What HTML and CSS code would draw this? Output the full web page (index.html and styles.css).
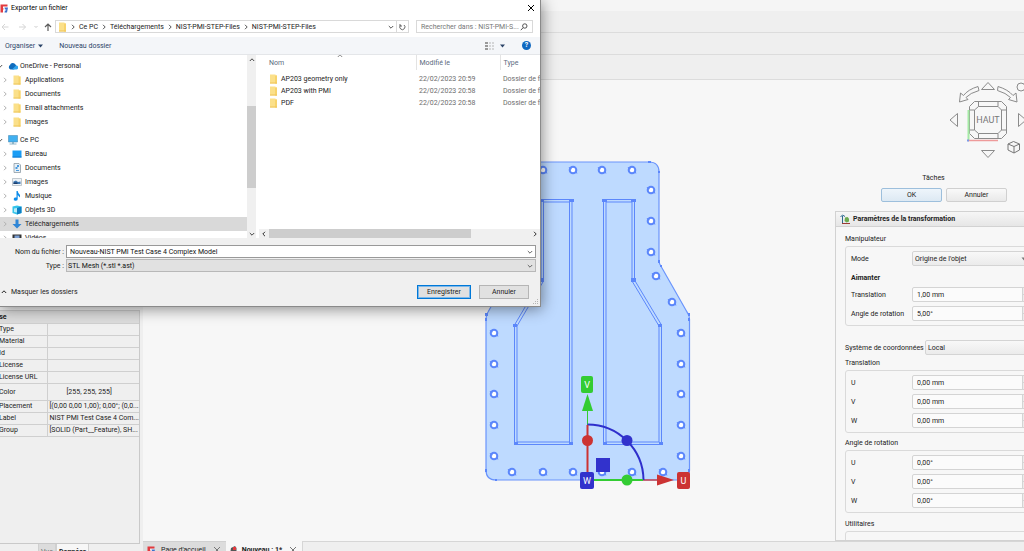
FILE: index.html
```html
<!DOCTYPE html>
<html lang="fr">
<head>
<meta charset="utf-8">
<title>Exporter un fichier</title>
<link rel="stylesheet" href="styles.css">
</head>
<body>
<svg class="defs" width="0" height="0" aria-hidden="true">
  <defs>
    <symbol id="chev-r" viewBox="0 0 6 6"><path d="M2 .8 4.2 3 2 5.2" fill="none" stroke="currentColor"/></symbol>
    <symbol id="chev-l" viewBox="0 0 6 6"><path d="M4 .8 1.8 3 4 5.2" fill="none" stroke="currentColor"/></symbol>
    <symbol id="chev-d" viewBox="0 0 6 6"><path d="M.8 2 3 4.2 5.2 2" fill="none" stroke="currentColor"/></symbol>
    <symbol id="chev-u" viewBox="0 0 6 6"><path d="M.8 4 3 1.8 5.2 4" fill="none" stroke="currentColor"/></symbol>
    <symbol id="cross" viewBox="0 0 8 8"><path d="M1 1 7 7M7 1 1 7" fill="none" stroke="currentColor"/></symbol>
    <symbol id="folder" viewBox="0 0 9 10"><path d="M1 .5h5.5v1H8v8H1z" fill="#fbe08a"/><path d="M6 1.5h2v8H6z" fill="#f7d36c"/><path d="M1 8.5h7v1H1z" fill="#eec55a"/></symbol>
    <symbol id="freecad" viewBox="0 0 9 9"><path d="M.5.5h7v2h-4.500v1.500h2v2h-2v2.500H.5z" fill="#e23a3f"/><path d="M3.500 3h4.500L6.500 8.500H3z" fill="#fff"/><path d="M4.500 3.500H8L7 8.500H4.500l.5-2h1l.3-1H5z" fill="#3d6fc9"/></symbol>
    <symbol id="hole" viewBox="0 0 10 10"><circle cx="5" cy="5" r="3.300" fill="#fff" stroke="#5c87fb" stroke-width="2"/><path d="M.5 2 4 2.500 3 5zM9.500 8.500 6.500 8 8 5.500z" fill="#5c87fb"/></symbol>
  </defs>
</svg>

<div class="app">
  <div class="menubar"></div>
  <div class="toolbar"></div>
  <div class="toolbar"></div>
  <div class="toolbar last"></div>
  <div class="workspace">
    <aside class="dock">
      <div class="tree-space"></div>
      <div class="props">
        <table>
          <colgroup><col class="c-key"><col></colgroup>
          <tr class="group"><th colspan="2">Base</th></tr>
          <tr><td>Type</td><td></td></tr>
          <tr><td>Material</td><td></td></tr>
          <tr><td>Id</td><td></td></tr>
          <tr><td>License</td><td></td></tr>
          <tr><td>License URL</td><td></td></tr>
          <tr class="tall"><td>Color</td><td class="color">[255, 255, 255]</td></tr>
          <tr><td>Placement</td><td>[(0,00 0,00 1,00); 0,00°; (0,0...</td></tr>
          <tr><td>Label</td><td>NIST PMI Test Case 4 Com...</td></tr>
          <tr><td>Group</td><td>[SOLID (Part__Feature), SH...</td></tr>
        </table>
      </div>
      <div class="dock-tabs"><button class="off">Vue</button><button class="on">Données</button></div>
    </aside>

    <main class="center">
      <div class="viewport">
        <div class="scene">
          <svg class="model" viewBox="480 155 220 340" role="img" aria-label="Modèle">
            <path d="M526 162H649q10 0 10 10V261q0 3 3 7L687 312q2.500 3 2.500 7V470q0 10-10 10H496q-10 0-10-10V319q0-4 2-7L513 268q3-4 3-7V172q0-10 10-10z" fill="#bedaff" stroke="#6a94fc" stroke-width="1.200"/>
            <g fill="none" stroke="#5c87fb">
              <path d="M603.500 199.500H634.500V280L661.500 325V444.500H603.500zM606 202H632V281L659 326V442H606z"/>
              <path d="M572 199.500H541V280L514.500 325V444.500H572zM569.500 202H543.500V281L517 326V442H569.500z"/>
            </g>
            <g fill="#5c87fb">
              <path d="M602 199h5v3h-5zM631 199h5v3h-5zM569 199h5v3h-5zM539 199h5v3h-5zM631 278h5v4h-5zM539 278h5v4h-5zM658 324h4v3h-4zM513 324h4v3h-4zM603 442h4v3h-4zM659 442h4v3h-4zM514 442h4v3h-4zM569 442h4v3h-4z"/>
              <path d="M648 161h3v2h-3zM658 171h2v2h-2zM658 260h2v3h-2zM660 265h2v2h-2zM688 313h2v3h-2zM485 313h3v3h-3zM485 318h2v3h-2zM688 318h2v3h-2zM485 469h2v3h-2zM495 479h2v2h-2zM688 469h2v3h-2z"/>
            </g>
            <g>
              <use href="#hole" x="538" y="165" width="10" height="10"/><use href="#hole" x="568" y="165" width="10" height="10"/><use href="#hole" x="597" y="165" width="10" height="10"/><use href="#hole" x="627" y="165" width="10" height="10"/>
              <use href="#hole" x="646" y="185" width="10" height="10"/><use href="#hole" x="646" y="216" width="10" height="10"/><use href="#hole" x="646" y="247" width="10" height="10"/><use href="#hole" x="651" y="271" width="10" height="10"/><use href="#hole" x="667" y="297" width="10" height="10"/><use href="#hole" x="498" y="297" width="10" height="10"/>
              <use href="#hole" x="676" y="328" width="10" height="10"/><use href="#hole" x="676" y="359" width="10" height="10"/><use href="#hole" x="676" y="389" width="10" height="10"/><use href="#hole" x="676" y="420" width="10" height="10"/><use href="#hole" x="676" y="451" width="10" height="10"/>
              <use href="#hole" x="489" y="328" width="10" height="10"/><use href="#hole" x="489" y="359" width="10" height="10"/><use href="#hole" x="489" y="389" width="10" height="10"/><use href="#hole" x="489" y="420" width="10" height="10"/><use href="#hole" x="489" y="451" width="10" height="10"/>
              <use href="#hole" x="507" y="467" width="10" height="10"/><use href="#hole" x="538" y="467" width="10" height="10"/><use href="#hole" x="568" y="467" width="10" height="10"/><use href="#hole" x="597" y="467" width="10" height="10"/><use href="#hole" x="627" y="467" width="10" height="10"/><use href="#hole" x="658" y="467" width="10" height="10"/>
            </g>
            <path d="M587.500 425V410" stroke="#33cc33"/>
            <path d="M587.500 394 593 411H582z" fill="#33cc33"/>
            <path d="M643 480H658" stroke="#cc3333" stroke-width="1.300"/>
            <path d="M657 474.500 674 480 657 485.500z" fill="#cc3333"/>
            <path d="M587.500 424.500A56 56 0 0 1 643.500 480" fill="none" stroke="#2f2fcc" stroke-width="2"/>
            <path d="M587.500 425V472" stroke="#cc3333" stroke-width="2"/>
            <path d="M593 480H643" stroke="#33cc33" stroke-width="2"/>
            <circle cx="587.500" cy="440.500" r="5.500" fill="#cc3333"/>
            <circle cx="627" cy="440.500" r="5.500" fill="#3232cc"/>
            <circle cx="627" cy="480" r="5.500" fill="#33cc33"/>
            <path d="M596 458h14v14h-14z" fill="#3232cc"/>
            <rect x="581" y="376" width="12" height="17" rx="2" fill="#33cc33"/>
            <rect x="580" y="472" width="14" height="17" rx="2" fill="#3232cc"/>
            <rect x="677" y="472" width="13" height="17" rx="2" fill="#cc3333"/>
            <g class="axis"><text x="587" y="388">V</text><text x="587" y="484">W</text><text x="683.500" y="484">U</text></g>
          </svg>
        </div>

        <section class="tasks">
          <svg class="navcube" viewBox="945 80 79 80" role="img" aria-label="Cube de navigation">
            <g fill="#f7f7f7" stroke="#8b8b8b">
              <path d="M988 82.500 994.500 89.500H981.500zM988 157.500 981.500 150.500H994.500zM950 120 957.500 113.500V126.500zM1026 120 1018.500 113.500V126.500z"/>
              <path d="M978 86.500Q968 89.500 963.500 95.500L960.500 93 959.500 102 968 99.500 966 97.500Q970 93 979 90.500zM998 86.500Q1008 89.500 1013 95.500L1016 93 1017 102 1008.500 99.500 1010.500 97.500Q1006 93 997.500 90.500z"/>
              <circle cx="1021" cy="87" r="4"/>
              <path d="M974.500 101.500H1001.500L1006.500 106.500V133.500L1001.500 138.500H974.500L969.500 133.500V106.500z"/>
              <path d="M978.500 106.500H998L1001.500 110V130L998 133.500H978.500L974.500 130V110z"/>
              <path d="M978.500 101.500V106.500M998 101.500V106.500M978.500 138.500V133.500M998 138.500V133.500M969.500 110H974.500M969.500 130H974.500M1006.500 110H1001.500M1006.500 130H1001.500" fill="none"/>
              <path d="M1008 144 1013.500 141.500 1019.500 144V150L1014 153 1008 150zM1008 144 1014 146.500 1019.500 144M1014 146.500V153" stroke="#777"/>
            </g>
            <path d="M968.500 110V140" stroke="#a5eaa5" stroke-width="2"/>
            <path d="M968 140.500H998" stroke="#ee9a9a" stroke-width="1.500"/>
            <path d="M967 139.500h2v2h-2z" fill="#7b9be8"/>
            <text x="988" y="123">HAUT</text>
          </svg>
          <h2>Tâches</h2>
          <div class="task-buttons"><button class="ok">OK</button><button>Annuler</button></div>
          <div class="panel">
            <h3><svg width="11" height="11" viewBox="0 0 11 11"><path d="M5 3.500 7.500 3 9 4.500v3L6.500 8.500 4.500 7z" fill="#6cab50"/><path d="M2.500 9V2M.5 3 2.500 1 5 2.500" stroke="#2d6b8e" fill="none"/><path d="M2 9.500h8" stroke="#9b3a35"/></svg>Paramètres de la transformation</h3>
            <div class="panel-body">
              <div class="caption">Manipulateur</div>
              <div class="box first">
                <div class="row"><label for="mode">Mode</label><select id="mode"><option>Origine de l'objet</option></select><svg class="tri" viewBox="0 0 6 4"><path d="M.5.5h5L3 3.500z" fill="#777"/></svg></div>
                <div class="row strong">Aimanter</div>
                <div class="row"><label for="tr">Translation</label><input id="tr" value="1,00 mm"><i class="spin"></i></div>
                <div class="row"><label for="an">Angle de rotation</label><input id="an" value="5,00°"><i class="spin"></i></div>
              </div>
              <div class="coords"><label for="sys">Système de coordonnées</label><select id="sys"><option>Local</option></select></div>
              <div class="caption">Translation</div>
              <div class="box">
                <div class="row"><label for="tu">U</label><input id="tu" value="0,00 mm"><i class="spin"></i></div>
                <div class="row"><label for="tv">V</label><input id="tv" value="0,00 mm"><i class="spin"></i></div>
                <div class="row"><label for="tw">W</label><input id="tw" value="0,00 mm"><i class="spin"></i></div>
              </div>
              <div class="caption angle">Angle de rotation</div>
              <div class="box">
                <div class="row"><label for="au">U</label><input id="au" value="0,00°"><i class="spin"></i></div>
                <div class="row"><label for="av">V</label><input id="av" value="0,00°"><i class="spin"></i></div>
                <div class="row"><label for="aw">W</label><input id="aw" value="0,00°"><i class="spin"></i></div>
              </div>
              <div class="caption util">Utilitaires</div>
              <div class="box tools"><button aria-label="Outil 1"></button><button aria-label="Outil 2"></button></div>
            </div>
          </div>
        </section>
      </div>
      <div class="mdi">
        <div class="tab"><svg width="9" height="9"><use href="#freecad"/></svg><span>Page d'accueil</span><button aria-label="Fermer"><svg width="8" height="8"><use href="#cross"/></svg></button></div>
        <div class="tab active"><svg width="7" height="9" viewBox="0 0 7 9"><path d="M1 2 5 0 6.500 2V7L2 9 0 8z" fill="#555"/><path d="M3 1h3v3H3z" fill="#e23a3f"/><path d="M1 5h2v2H1z" fill="#ddd"/></svg><span>Nouveau : 1*</span><button aria-label="Fermer"><svg width="8" height="8"><use href="#cross"/></svg></button></div>
        <div class="rest"></div>
      </div>
    </main>
  </div>
</div>

<div class="dialog" role="dialog" aria-label="Exporter un fichier">
  <header class="title"><svg width="9" height="9"><use href="#freecad"/></svg><span>Exporter un fichier</span><button aria-label="Fermer"><svg width="8" height="8"><use href="#cross"/></svg></button></header>
  <div class="address">
    <svg class="nav" width="52" height="8" viewBox="0 0 52 8"><g fill="none"><path d="M8.500 4H2M5 1 2 4 5 7M19 4h6.500M22.500 1l3 3-3 3" stroke="#d5d5d5"/><path d="M34.500 3 36 4.500 37.500 3" stroke="#ccc"/><path d="M48 8V1M45 4 48 1 51 4" stroke="#5c5c5c" stroke-width="1.200"/></g></svg>
    <div class="path">
      <svg width="9" height="10"><use href="#folder"/></svg>
      <svg class="sep" width="6" height="6"><use href="#chev-r"/></svg><a href="#">Ce PC</a>
      <svg class="sep" width="6" height="6"><use href="#chev-r"/></svg><a href="#">Téléchargements</a>
      <svg class="sep" width="6" height="6"><use href="#chev-r"/></svg><a href="#">NIST-PMI-STEP-Files</a>
      <svg class="sep" width="6" height="6"><use href="#chev-r"/></svg><a href="#">NIST-PMI-STEP-Files</a>
      <svg class="drop" width="6" height="6"><use href="#chev-d"/></svg>
      <button class="refresh" aria-label="Actualiser"><svg width="7" height="8" viewBox="0 0 7 8"><path d="M1.500 2.200A2.600 2.600 0 1 0 5 2M1 1v2h2" fill="none" stroke="#666"/></svg></button>
    </div>
    <div class="search"><input aria-label="Rechercher" placeholder="Rechercher dans : NIST-PMI-S..."><svg width="8" height="8" viewBox="0 0 8 8"><circle cx="4.800" cy="3" r="2.200" fill="none" stroke="#555"/><path d="M3.200 4.600.8 7.200" stroke="#555"/></svg></div>
  </div>
  <div class="commands">
    <button>Organiser <svg width="5" height="4" viewBox="0 0 5 4"><path d="M0 .5h5L2.500 3.500z" fill="#2b4468"/></svg></button>
    <button class="new">Nouveau dossier</button>
    <svg class="view" width="20" height="8" viewBox="0 0 20 8"><path d="M0 0h3v2H0zM0 3h3v2H0zM0 6h3v2H0z" fill="#9a9a9a"/><path d="M4 1h2M7 1h2M4 4h2M7 4h2M4 7h2M7 7h2" stroke="#b5b5b5"/><path d="M15 2.500h5L17.500 5.500z" fill="#2b4468"/></svg>
    <button class="help" aria-label="Aide">?</button>
  </div>
  <div class="browser">
    <ul class="tree">
      <li class="root"><svg class="tw" width="6" height="6"><use href="#chev-d"/></svg><svg width="10" height="8" viewBox="0 0 10 8"><path d="M2.500 7.500A2.500 2.500 0 0 1 2 3a3 3 0 0 1 5.500-.5L9 5l-3 2.500z" fill="#0f6cbd"/><path d="M4 7.500 8 3.500a2 2 0 0 1 .3 4z" fill="#31a5ee"/></svg>OneDrive - Personal</li>
      <li><svg class="tw" width="6" height="6"><use href="#chev-r"/></svg><svg width="10" height="10" viewBox="0 0 9 10"><use href="#folder"/></svg>Applications</li>
      <li><svg class="tw" width="6" height="6"><use href="#chev-r"/></svg><svg width="10" height="10" viewBox="0 0 9 10"><use href="#folder"/></svg>Documents</li>
      <li><svg class="tw" width="6" height="6"><use href="#chev-r"/></svg><svg width="10" height="10" viewBox="0 0 9 10"><use href="#folder"/></svg>Email attachments</li>
      <li><svg class="tw" width="6" height="6"><use href="#chev-r"/></svg><svg width="10" height="10" viewBox="0 0 9 10"><use href="#folder"/></svg>Images</li>
      <li class="root pc"><svg class="tw" width="6" height="6"><use href="#chev-d"/></svg><svg width="10" height="10" viewBox="0 0 10 10"><path d="M.5.5h9v6.500h-9z" fill="#41b0f0" stroke="#4a8fb8" stroke-width=".6"/><path d="M4 7h2v1.500H4zM1.500 8.500h7v1h-7z" fill="#8db4c8"/></svg>Ce PC</li>
      <li><svg class="tw" width="6" height="6"><use href="#chev-r"/></svg><svg width="10" height="10" viewBox="0 0 10 10"><path d="M.5 1.500h9v7h-9z" fill="#1b9df5"/><path d="M.5 7.500h9v1h-9z" fill="#1479cf"/></svg>Bureau</li>
      <li><svg class="tw" width="6" height="6"><use href="#chev-r"/></svg><svg width="10" height="10" viewBox="0 0 10 10"><path d="M2 .5h5l1.500 1.500v7.500H2z" fill="#e6f0f7" stroke="#8d9aa5" stroke-width=".8"/><path d="M3.500 4h2v2h-2zM5 2h2v2H5zM4 7h3v1H4z" fill="#4a9ade"/></svg>Documents</li>
      <li><svg class="tw" width="6" height="6"><use href="#chev-r"/></svg><svg width="10" height="10" viewBox="0 0 10 10"><path d="M.5 1.500h9v7h-9z" fill="#eef3f7" stroke="#aab4bc" stroke-width=".7"/><path d="M1.500 4.500 4 3.500 6 5 8.500 4.500V7h-7z" fill="#3c78b4"/><path d="M1.500 5.500h4V7h-4z" fill="#1d3d6a"/></svg>Images</li>
      <li><svg class="tw" width="6" height="6"><use href="#chev-r"/></svg><svg width="10" height="10" viewBox="0 0 10 10"><path d="M4.500 0h1.200Q6 2.500 8 4q.5 1.500-.8 2.500Q7.300 5 5.700 4v4A2 1.600 0 1 1 4.500 6.600z" fill="#0a8bea"/></svg>Musique</li>
      <li><svg class="tw" width="6" height="6"><use href="#chev-r"/></svg><svg width="10" height="10" viewBox="0 0 10 10"><path d="M.5 1.500 5 .5l4.500 1V8L5 9.500.5 8z" fill="#35c4ea"/><path d="M5 3 9.500 1.500V8L5 9.500z" fill="#0e7fc4"/><path d="M2 3.500 5 3v4.500L2 7z" fill="#b7edf8"/></svg>Objets 3D</li>
      <li class="selected"><svg class="tw" width="6" height="6"><use href="#chev-r"/></svg><svg width="10" height="10" viewBox="0 0 10 10"><path d="M3.500.5h3V5H9.500L5 9.500.5 5h3z" fill="#2f86d6"/></svg>Téléchargements</li>
      <li><svg class="tw" width="6" height="6"><use href="#chev-r"/></svg><svg width="10" height="10" viewBox="0 0 10 10"><path d="M.5 1.500h9v8h-9z" fill="#333"/><path d="M2.500 2.500h5v3h-5z" fill="#7b9fd4"/><path d="M2.500 5.500h5v2h-5z" fill="#9a7b58"/></svg>Vidéos</li>
    </ul>
    <div class="vbar"><svg width="6" height="6"><use href="#chev-u"/></svg><i></i><svg width="6" height="6"><use href="#chev-d"/></svg></div>
    <div class="files">
      <svg class="sort" width="6" height="6"><use href="#chev-u"/></svg>
      <table>
        <colgroup><col class="c-name"><col class="c-date"><col></colgroup>
        <thead><tr><th>Nom</th><th>Modifié le</th><th>Type</th></tr></thead>
        <tbody>
          <tr><td><svg width="9" height="10"><use href="#folder"/></svg>AP203 geometry only</td><td>22/02/2023 20:59</td><td>Dossier de fi</td></tr>
          <tr><td><svg width="9" height="10"><use href="#folder"/></svg>AP203 with PMI</td><td>22/02/2023 20:58</td><td>Dossier de fi</td></tr>
          <tr><td><svg width="9" height="10"><use href="#folder"/></svg>PDF</td><td>22/02/2023 20:58</td><td>Dossier de fi</td></tr>
        </tbody>
      </table>
      <div class="hbar"><svg width="6" height="6"><use href="#chev-l"/></svg><i></i><svg width="6" height="6"><use href="#chev-r"/></svg></div>
    </div>
  </div>
  <div class="form">
    <label for="fname">Nom du fichier :</label>
    <div class="field"><input id="fname" value="Nouveau-NIST PMI Test Case 4 Complex Model"><svg width="6" height="6"><use href="#chev-d"/></svg></div>
    <label for="ftype">Type :</label>
    <div class="field grey"><select id="ftype"><option>STL Mesh (*.stl *.ast)</option></select><svg width="6" height="6"><use href="#chev-d"/></svg></div>
  </div>
  <footer class="actions">
    <button class="hide"><svg width="6" height="6"><use href="#chev-u"/></svg>Masquer les dossiers</button>
    <button class="btn primary">Enregistrer</button>
    <button class="btn">Annuler</button>
  </footer>
  <svg class="grip" width="6" height="6" viewBox="0 0 6 6"><path d="M4 0h1v1H4zM2 2h1v1H2zM4 2h1v1H4zM0 4h1v1H0zM2 4h1v1H2zM4 4h1v1H4z" fill="#b5b5b5"/></svg>
</div>
</body>
</html>
```
FILE: styles.css
```css
* { box-sizing: border-box; }
body {
  margin: 0;
  overflow: hidden;
  font: 7px/12px Roboto, "Noto Sans", sans-serif;
  color: #222;
  background: #efefef;
}
button, input, select {
  font: inherit;
  color: inherit;
  margin: 0;
  padding: 0;
  border: 0;
  border-radius: 0;
  background: none;
  appearance: none;
}
svg { display: block; flex: none; }
.defs { position: absolute; }
table { border-collapse: collapse; border-spacing: 0; }

/* Main window */
.app { display: flex; flex-direction: column; height: 100vh; }
.menubar { height: 11px; flex: none; background: #f5f5f5; }
.toolbar { height: 22px; flex: none; border-bottom: 1px solid #dcdcdc; }
.toolbar.last { height: 25px; }
.workspace { display: flex; flex: 1; min-height: 0; }

.dock { display: flex; flex-direction: column; flex: none; width: 140px; }
.tree-space { flex: 1; }
.props { height: 234px; border: solid #c9c9c9; border-width: 1px 1px 1px 0; overflow: hidden; }
.props table { table-layout: fixed; width: 148px; margin-left: -9px; }
.c-key { width: 56px; }
.props th { height: 12px; padding: 0; background: #dcdcdc; text-align: left; }
.props td { height: 12px; padding: 0 0 0 8px; line-height: 11px; border: solid #cfcfcf; border-width: 1px 0; white-space: nowrap; overflow: hidden; }
.props td:first-child { border-right-width: 1px; }
.props td + td { padding-left: 2px; }
.props .tall td { height: 17px; }
.props td.color { padding-left: 19px; }
.dock-tabs { display: flex; height: 7px; padding-left: 38px; overflow: hidden; }
.dock-tabs button { height: 15px; padding: 1px 2px 0; border: 1px solid #d0d0d0; border-top: 0; }
.dock-tabs .off { background: #dcdcdc; color: #666; }
.dock-tabs .on { background: #f7f7f7; font-weight: bold; }

.center { display: flex; flex-direction: column; flex: 1; min-width: 0; margin-left: 3px; }
.viewport { display: flex; flex: 1; min-height: 0; overflow: hidden; background: #f7f7f7; }
.scene { position: relative; flex: 1; }
.model { position: absolute; left: 337px; top: 75px; width: 220px; height: 340px; }
.axis { font-size: 9px; fill: #fff; text-anchor: middle; }

.mdi { display: flex; height: 10px; overflow: hidden; }
.tab { display: flex; align-items: center; gap: 5px; height: 17px; padding: 0 5px 0 4px; background: #dcdcdc; border-top: 1px solid #d0d0d0; }
.tab button { padding-left: 2px; color: #777; }
.tab.active { background: #f7f7f7; font-weight: bold; border-top-color: #f7f7f7; }
.rest { flex: 1; border: solid #d6d6d6; border-width: 1px 0 0 1px; }

/* Task panel */
.tasks { display: flex; flex-direction: column; flex: none; width: 197px; margin-right: -8px; }
.navcube { width: 79px; height: 80px; margin-left: 110px; }
.navcube text { font-size: 9px; fill: #777; text-anchor: middle; }
.tasks h2 { margin: 12px 0 4px; font-size: 7px; font-weight: normal; line-height: 12px; text-align: center; }
.task-buttons { display: flex; gap: 4px; margin: 0 0 9px 46px; }
.task-buttons button { width: 61px; height: 14px; border: 1px solid #d0d0d0; border-radius: 2px; background: linear-gradient(#f9f9f9, #e9e9e9); }
.task-buttons .ok { border-color: #9dbfdc; background: linear-gradient(#eef5fb, #dde9f3); }
.panel { flex: 1; min-height: 0; overflow: hidden; border: 1px solid #d2d2d2; border-right: 0; }
.panel h3 { display: flex; align-items: center; gap: 2px; height: 15px; margin: 0; padding-left: 4px; font-size: 7px; background: linear-gradient(#f6f6f6, #e6e6e6); border-bottom: 1px solid #d2d2d2; }
.panel-body { padding: 6px 0 0 9px; }
.caption { height: 13px; line-height: 13px; }
.box { display: flex; flex-direction: column; gap: 4px; padding: 4px 1px 4px 5px; border: 1px solid #dadada; border-radius: 3px; }
.row { display: flex; align-items: center; }
.row label { width: 61px; }
.row.strong { height: 13px; padding-top: 3px; font-weight: bold; }
.row input, .row select { flex: 1; min-width: 0; height: 15px; padding-left: 4px; border: 1px solid #d4d4d4; border-radius: 2px; background: #fbfbfb; }
.row select, .coords select { padding-left: 2px; background: linear-gradient(#f8f8f8, #ebebeb); }
.tri { width: 6px; height: 4px; margin: 0 3px 0 -9px; }
.spin { width: 7px; height: 13px; margin-left: -8px; margin-right: 1px; border-left: 1px solid #d4d4d4; background: linear-gradient(#ececec 6px, #d4d4d4 6px 7px, #ececec 7px); }
.coords { display: flex; align-items: center; margin: 14px 0 2px; }
.coords label { width: 80px; }
.coords select { flex: 1; height: 15px; border: 1px solid #d4d4d4; border-radius: 2px; }
.angle { margin-top: 4px; }
.util { margin-top: 5px; }
.tools { flex-direction: row; height: 30px; padding-top: 9px; }
.tools button { flex: 1; height: 14px; border: 1px solid #d4d4d4; }

/* Export dialog, over the main window */
.dialog {
  position: absolute;
  left: 0;
  top: 0;
  display: flex;
  flex-direction: column;
  width: 541px;
  background: #f0f0f0;
  border: solid #8a8a8a;
  border-width: 0 1px 1px 0;
  box-shadow: 1px 2px 14px rgba(0, 0, 0, .45);
}
.title { display: flex; align-items: center; gap: 2px; height: 16px; padding-right: 5px; background: #fff; color: #000; }
.title span { flex: 1; }
.address { display: flex; align-items: center; height: 21px; padding: 0 7px 0 0; background: #fff; }
.path { display: flex; align-items: center; flex: 1; height: 13px; margin-left: 3px; padding-left: 2px; border: 1px solid #d9d9d9; }
.path a { color: inherit; text-decoration: none; white-space: nowrap; }
.sep { margin: 0 3px; color: #555; }
.drop { margin-left: auto; color: #555; }
.refresh { display: flex; align-items: center; justify-content: center; width: 12px; height: 11px; margin-left: 2px; border-left: 1px solid #d9d9d9; }
.search { display: flex; align-items: center; width: 117px; height: 13px; margin-left: 7px; padding: 0 4px; border: 1px solid #d9d9d9; }
.search input { flex: 1; min-width: 0; height: 11px; }
.search input::placeholder { color: #777; opacity: 1; }
.commands { display: flex; align-items: center; height: 18px; padding: 0 9px 0 5px; background: #f4f6f9; border-bottom: 1px solid #e4e6e9; color: #2b4468; }
.commands button { display: flex; align-items: center; gap: 3px; }
.commands .new { margin-left: 16px; }
.view { margin: 0 17px 0 auto; }
.commands .help { justify-content: center; width: 9px; height: 9px; border-radius: 50%; background: #0f68c0; color: #fff; font-weight: bold; line-height: 9px; }
.browser { display: flex; height: 183px; background: #fff; overflow: hidden; }
.tree { width: 247px; margin: 0; padding: 4px 0 0; list-style: none; }
.tree li { display: flex; align-items: center; gap: 3px; height: 14px; padding-left: 2px; white-space: nowrap; }
.tree li.root { padding-left: 0; gap: 2px; }
.tree .pc { margin-top: 4px; }
.tree .tw { margin-right: 1px; color: #b0b0b0; }
.tree .root .tw { margin-left: -3px; margin-right: 3px; color: #555; }
.tree .selected { background: #d9d9d9; }
.vbar { display: flex; flex-direction: column; align-items: center; width: 9px; padding: 2px 0 1px; background: #f0f0f0; color: #444; }
.vbar i { width: 9px; height: 82px; margin: 43px 0 auto; background: #cdcdcd; }
.files { position: relative; display: flex; flex-direction: column; flex: 1; min-width: 0; margin-left: 3px; overflow: hidden; }
.files table { table-layout: fixed; width: 320px; }
.c-name { width: 157px; }
.c-date { width: 84px; }
.files th { height: 15px; padding: 0 0 0 3px; font-weight: normal; text-align: left; color: #5b6b7e; border-right: 1px solid #e3e3e3; }
.files th:first-child, .files td:first-child { padding-left: 10px; }
.files td { height: 12px; padding: 0 0 0 3px; color: #6d6d6d; white-space: nowrap; }
.files td:first-child { color: #222; }
.files td svg { display: inline-block; vertical-align: middle; margin-right: 3px; }
.files tbody::before { content: ""; display: block; height: 3px; }
.sort { position: absolute; left: 78px; top: -2px; color: #888; }
.hbar { display: flex; align-items: center; height: 9px; margin-top: auto; padding: 0 2px; background: #f0f0f0; color: #333; }
.hbar i { width: 202px; height: 9px; margin: 0 auto 0 2px; background: #cdcdcd; }
.form { display: grid; grid-template-columns: 64px 1fr; gap: 1px 2px; padding: 7px 4px 0 0; align-items: center; }
.form label { text-align: right; }
.field { display: flex; align-items: center; height: 13px; padding: 0 2px 0 3px; border: 1px solid #999; background: #fff; color: #111; }
.field input, .field select { flex: 1; min-width: 0; height: 11px; }
.field svg { color: #666; }
.field.grey { padding-left: 1px; background: #e1e1e1; border-color: #b8b8b8; }
.actions { display: flex; align-items: center; gap: 8px; padding: 13px 11px 7px 1px; }
.actions .hide { display: flex; align-items: center; gap: 4px; margin-right: auto; }
.btn { width: 50px; height: 14px; border: 1px solid #b5b5b5; background: #e1e1e1; }
.primary { width: 54px; border: 1px solid #0078d7; outline: 1px solid #7db8ea; outline-offset: -2px; }
.grip { position: absolute; right: 1px; bottom: 1px; }
```
